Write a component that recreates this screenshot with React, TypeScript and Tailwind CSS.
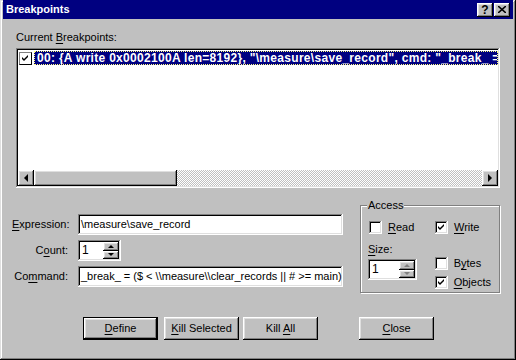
import React from 'react';

const raised = 'shadow-[inset_-1px_-1px_#000,inset_1px_1px_#fff,inset_-2px_-2px_#808080,inset_2px_2px_#dfdfdf]';
const sunken = 'shadow-[inset_-1px_-1px_#fff,inset_1px_1px_#808080,inset_-2px_-2px_#dfdfdf,inset_2px_2px_#000]';

const Check = () => (
  <svg width="13" height="13" viewBox="0 0 13 13" className="block">
    <polygon points="3,5 5,7 9,3 9,5 5,9 3,7" fill="#000" />
  </svg>
);

const CheckBox = ({ checked, label, u }: { checked?: boolean; label: string; u: number }) => (
  <div className="flex items-center h-[13px]">
    <div className={`w-[13px] h-[13px] bg-white ${sunken}`}>{checked && <Check />}</div>
    <span className="ml-[6px] leading-[13px]">
      {label.slice(0, u)}
      <span className="underline underline-offset-[2px]">{label[u]}</span>
      {label.slice(u + 1)}
    </span>
  </div>
);

const Arrow = ({ dir, grey }: { dir: 'up' | 'down' | 'left' | 'right'; grey?: boolean }) => {
  const c = grey ? '#808080' : '#000';
  const pts: Record<string, string> = {
    up: '1,4 4,1 7,4',
    down: '1,1 4,4 7,1',
    left: '4,0 0,4 4,8',
    right: '0,0 4,4 0,8',
  };
  const box = dir === 'up' || dir === 'down' ? [8, 5] : [5, 8];
  return (
    <svg width={box[0]} height={box[1]} viewBox={`0 0 ${box[0]} ${box[1]}`} className="block">
      <polygon points={pts[dir]} fill={c} />
    </svg>
  );
};

const Spin = ({ value, w, grey }: { value: string; w: string; grey?: boolean }) => (
  <div className={`${w} h-[21px] bg-white ${sunken} p-[2px] flex`}>
    <div className="flex-1 pl-[2px] text-[12px] leading-[17px]">{value}</div>
    <div className="w-[16px] flex flex-col">
      <div className={`flex-1 bg-[#c0c0c0] ${raised} flex items-center justify-center`}>
        <Arrow dir="up" grey={grey} />
      </div>
      <div className={`flex-1 bg-[#c0c0c0] ${raised} flex items-center justify-center`}>
        <Arrow dir="down" grey={grey} />
      </div>
    </div>
  </div>
);

const Field = ({ label, u, children }: { label: string; u: number; children: React.ReactNode }) => (
  <div className="flex items-center">
    <div className="w-[58px] text-right pr-[2px] leading-[13px] whitespace-nowrap">
      {label.slice(0, u)}
      <span className="underline underline-offset-[2px]">{label[u]}</span>
      {label.slice(u + 1)}
    </div>
    <div className="ml-[8px]">{children}</div>
  </div>
);

const Btn = ({ label, u, def, className = '' }: { label: string; u: number; def?: boolean; className?: string }) => (
  <div className={`w-[75px] h-[23px] ${def ? 'border border-black' : ''} ${className}`}>
    <div className={`w-full h-full bg-[#c0c0c0] ${raised} flex items-center justify-center`}>
      <span>
        {label.slice(0, u)}
        <span className="underline underline-offset-[2px]">{label[u]}</span>
        {label.slice(u + 1)}
      </span>
    </div>
  </div>
);

export default function App() {
  return (
    <div className="w-[516px] h-[360px] bg-[#c0c0c0] px-[3px] pb-[3px] flex flex-col text-[11px] text-black font-['Liberation_Sans','Arial',sans-serif] shadow-[inset_-1px_-1px_#000,inset_1px_1px_#dfdfdf,inset_-2px_-2px_#808080,inset_2px_2px_#fff]">
      {/* Title bar */}
      <div className="h-[19px] bg-[#000080] flex items-center pl-[3px] pr-[3px]">
        <span className="text-white font-bold leading-[13px]">Breakpoints</span>
        <div className="ml-auto flex gap-[1px]">
          <div className={`w-[16px] h-[14px] bg-[#c0c0c0] ${raised} flex items-center justify-center font-bold text-[12px] leading-none`}>?</div>
          <div className={`w-[16px] h-[14px] bg-[#c0c0c0] ${raised} flex items-center justify-center`}>
            <svg width="8" height="7" viewBox="0 0 8 7" className="block">
              <path d="M0 0 L8 7 M8 0 L0 7" stroke="#000" strokeWidth="1.6" />
            </svg>
          </div>
        </div>
      </div>

      <div className="px-[13px] pt-[11px] flex flex-col">
        <div className="leading-[14px] h-[14px]">
          Current <span className="underline underline-offset-[2px]">B</span>reakpoints:
        </div>

        {/* List */}
        <div className={`mt-[4px] w-[484px] h-[140px] bg-white ${sunken} p-[2px] flex flex-col`}>
          <div className="flex-1 pt-[1px]">
            <div className="flex items-center h-[14px] pl-[1px]">
              <div className="w-[13px] h-[13px] bg-white border border-[#808080] border-r-black border-b-black flex items-center justify-center">
                <svg width="11" height="11" viewBox="1 1 11 11" className="block">
                  <polygon points="3,5 5,7 9,3 9,5 5,9 3,7" fill="#000" />
                </svg>
              </div>
              <div className="ml-[2px] flex-1 h-[14px] bg-[#000080] border border-dotted border-[#ffff7f] overflow-hidden whitespace-nowrap text-white font-bold text-[12px] tracking-[0.3px] leading-[12px] pl-[2px]">
                {'00: {A write 0x0002100A len=8192},  "\\measure\\save_record",  cmd: "_break_ = ($ < \\\\measure\\\\clear_records || # >= main)"'}
              </div>
            </div>
          </div>
          <div className="h-[16px] flex">
            <div className={`w-[16px] bg-[#c0c0c0] ${raised} flex items-center justify-center`}>
              <Arrow dir="left" />
            </div>
            <div className="flex-1 flex bg-[repeating-conic-gradient(#c0c0c0_0%_25%,#fff_0%_50%)] bg-[length:2px_2px]">
              <div className={`w-[143px] bg-[#c0c0c0] ${raised}`} />
            </div>
            <div className={`w-[16px] bg-[#c0c0c0] ${raised} flex items-center justify-center`}>
              <Arrow dir="right" />
            </div>
          </div>
        </div>

        {/* Form */}
        <div className="mt-[11px] flex items-start">
          <div className="pt-[15px] flex flex-col gap-[5px] -ml-[4px]">
            <Field label="Expression:" u={0}>
              <div className={`w-[265px] h-[21px] bg-white ${sunken} px-[3px] leading-[21px] whitespace-nowrap overflow-hidden`}>
                {'\\measure\\save_record'}
              </div>
            </Field>
            <Field label="Count:" u={1}>
              <Spin value="1" w="w-[43px]" />
            </Field>
            <Field label="Command:" u={2}>
              <div className={`w-[265px] h-[21px] bg-white ${sunken} px-[3px] leading-[21px] whitespace-nowrap overflow-hidden`}>
                {'_break_ = ($ < \\\\measure\\\\clear_records || # >= main)'}
              </div>
            </Field>
          </div>

          <div className="ml-auto mt-[6px] relative w-[140px] h-[88px] border border-[#808080] shadow-[inset_1px_1px_#fff,1px_1px_#fff] px-[8px] pt-[15px]">
            <span className="absolute left-[6px] -top-[7px] bg-[#c0c0c0] px-[1px] leading-[13px]">Access</span>
            <div className="flex">
              <div className="w-[66px]">
                <CheckBox label="Read" u={0} />
              </div>
              <CheckBox label="Write" u={0} checked />
            </div>
            <div className="flex mt-[9px]">
              <div className="w-[66px]">
                <div className="leading-[13px] -ml-[1px]">
                  <span className="underline underline-offset-[2px]">S</span>ize:
                </div>
                <div className="mt-[3px] -ml-[1px]">
                  <Spin value="1" w="w-[49px]" grey />
                </div>
              </div>
              <div className="pt-[14px] flex flex-col gap-[6px]">
                <CheckBox label="Bytes" u={1} />
                <CheckBox label="Objects" u={0} checked />
              </div>
            </div>
          </div>
        </div>

        {/* Buttons */}
        <div className="mt-[24px] flex pl-[67px]">
          <Btn label="Define" u={0} def />
          <Btn label="Kill Selected" u={0} className="ml-[6px]" />
          <Btn label="Kill All" u={5} className="ml-[4px]" />
          <Btn label="Close" u={0} className="ml-[41px]" />
        </div>
      </div>
    </div>
  );
}
